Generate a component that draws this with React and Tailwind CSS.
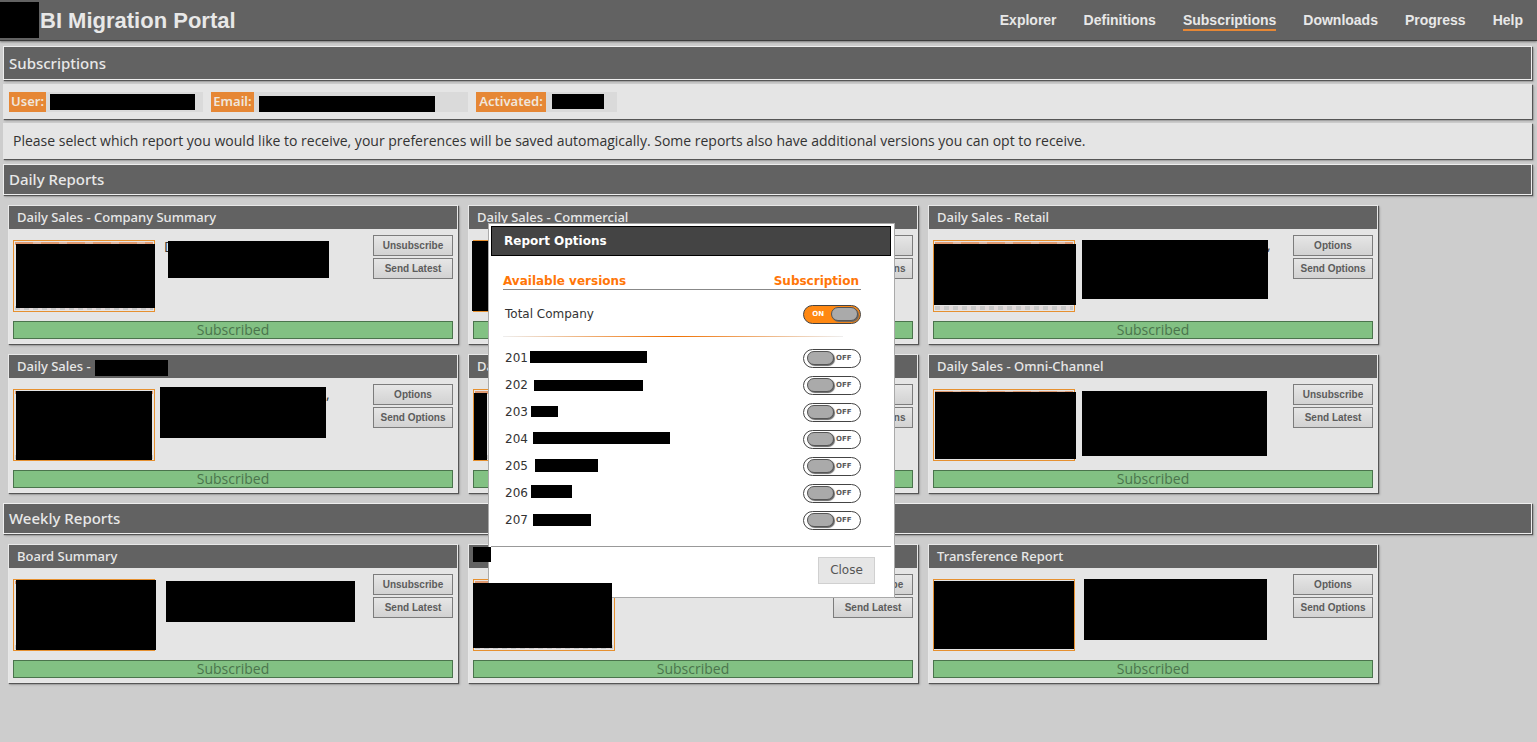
import React, { useState } from "react";

const navItems = ["Explorer", "Definitions", "Subscriptions", "Downloads", "Progress", "Help"];

const dailyReports = [
  {
    title: "Daily Sales - Company Summary",
    actions: ["Unsubscribe", "Send Latest"],
    thumb: "left-[7px] top-[38px] w-[139px] h-[64px]",
    desc: "left-[159px] top-[35px] w-[161px] h-[37px]",
    lead: "D",
  },
  {
    title: "Daily Sales - Commercial",
    actions: ["Options", "Send Options"],
    thumb: "left-[3px] top-[35px] w-[139px] h-[70px]",
  },
  {
    title: "Daily Sales - Retail",
    actions: ["Options", "Send Options"],
    thumb: "left-[5px] top-[38px] w-[142px] h-[61px]",
    desc: "left-[153px] top-[34px] w-[186px] h-[59px]",
    tail: "left-[338px] top-[29px]",
  },
  {
    title: "Daily Sales -",
    masked: "w-[73px]",
    actions: ["Options", "Send Options"],
    thumb: "left-[7px] top-[36px] w-[136px] h-[69px]",
    desc: "left-[151px] top-[32px] w-[166px] h-[51px]",
    tail: "left-[317px] top-[29px]",
  },
  {
    title: "Daily Sales -",
    masked: "w-[73px]",
    actions: ["Options", "Send Options"],
    thumb: "left-[5px] top-[38px] w-[13px] h-[67px]",
  },
  {
    title: "Daily Sales - Omni-Channel",
    actions: ["Unsubscribe", "Send Latest"],
    thumb: "left-[6px] top-[37px] w-[141px] h-[67px]",
    desc: "left-[153px] top-[36px] w-[185px] h-[65px]",
  },
];

const weeklyReports = [
  {
    title: "Board Summary",
    actions: ["Unsubscribe", "Send Latest"],
    thumb: "left-[7px] top-[35px] w-[140px] h-[70px]",
    desc: "left-[157px] top-[36px] w-[189px] h-[41px]",
  },
  {
    title: "",
    cover: "left-[4px] top-[2px] w-[18px] h-[15px]",
    actions: ["Unsubscribe", "Send Latest"],
    thumb: "left-[4px] top-[38px] w-[139px] h-[65px] z-20",
  },
  {
    title: "Transference Report",
    actions: ["Options", "Send Options"],
    thumb: "left-[5px] top-[36px] w-[140px] h-[68px]",
    desc: "left-[155px] top-[34px] w-[183px] h-[61px]",
  },
];

const versions = [
  { code: "201", mask: "left-[27px] top-[7px] w-[117px] h-[12px]" },
  { code: "202", mask: "left-[31px] top-[9px] w-[109px] h-[11px]" },
  { code: "203", mask: "left-[28px] top-[8px] w-[27px] h-[11px]" },
  { code: "204", mask: "left-[30px] top-[7px] w-[137px] h-[12px]" },
  { code: "205", mask: "left-[32px] top-[7px] w-[63px] h-[13px]" },
  { code: "206", mask: "left-[28px] top-[6px] w-[41px] h-[13px]" },
  { code: "207", mask: "left-[30px] top-[8px] w-[58px] h-[12px]" },
];

const panelShadow = "shadow-[1px_1px_1px_#555,2px_2px_2px_#aaa]";

function SectionBar({ children, className = "h-[31px]" }) {
  return (
    <h2
      className={`flex items-center border border-[#eee] bg-[#626262] px-[5px] font-['Noto_Sans','Open_Sans',sans-serif] text-[15px] font-medium text-[#e8e8e8] ${panelShadow} ${className}`}
    >
      {children}
    </h2>
  );
}

function Field({ label, boxClass, labelClass, maskClass }) {
  return (
    <div className={`flex h-5 items-center bg-[#dadada] ${boxClass}`}>
      <span
        className={`flex h-5 items-center justify-center bg-[#e68735] font-['Noto_Sans','Open_Sans',sans-serif] text-[13px] font-semibold text-[#f0e6dc] ${labelClass}`}
      >
        {label}
      </span>
      <span className={`bg-black ${maskClass}`} />
    </div>
  );
}

function ReportCard({ report }) {
  return (
    <article className={`relative flex w-[450px] flex-col border border-[#e8e8e8] bg-[#e5e5e5] ${panelShadow}`}>
      <h3 className="flex h-[23px] items-center gap-1 bg-[#626262] px-2 font-['Noto_Sans','Open_Sans',sans-serif] text-[13px] font-medium text-[#e8e8e8]">
        {report.title}
        {report.masked && <span className={`mt-[3px] h-4 bg-black ${report.masked}`} />}
      </h3>
      <div className="flex px-1 pb-[9px] pt-[6px]">
        <div className="mt-[5px] h-[72px] w-[142px] border border-[#e6902f] p-px">
          <div className="flex h-full flex-col justify-between">
            <div className="h-[3px] bg-[repeating-linear-gradient(90deg,#e09a70_0_18px,#e3b8a0_18px_26px)]" />
            <div className="h-1 bg-[repeating-linear-gradient(90deg,#c8c8c8_0_5px,#e2dada_5px_9px)]" />
          </div>
        </div>
        {report.lead && <span className="ml-[9px] mt-[2px] text-sm text-[#333]">{report.lead}</span>}
        <div className="ml-auto flex flex-col gap-[2px]">
          {report.actions.map((a) => (
            <button
              key={a}
              type="button"
              className="h-[21px] w-20 border border-[#7c7c7c] bg-linear-to-b from-[#e6e6e6] to-[#d2d2d2] text-center font-['Liberation_Sans',Arial,sans-serif] text-[10px] font-bold text-[#5c5c5c]"
            >
              {a}
            </button>
          ))}
        </div>
      </div>
      <div className="mx-1 mb-1 flex h-[18px] items-center justify-center border border-[#4a744c] bg-[#82c183] text-sm text-[#4a744c]">
        Subscribed
      </div>
      {report.tail && <span className={`absolute text-sm text-[#333] ${report.tail}`}>,</span>}
      <span className={`absolute bg-black ${report.thumb}`} />
      {report.desc && <span className={`absolute bg-black ${report.desc}`} />}
      {report.cover && <span className={`absolute z-20 bg-black ${report.cover}`} />}
    </article>
  );
}

function Toggle({ id, initial }) {
  const [on, setOn] = useState(initial);
  return (
    <label
      htmlFor={id}
      className={`flex h-[19px] w-[58px] cursor-pointer items-center rounded-full border border-[#444] text-[7px] font-bold ${
        on ? "flex-row-reverse gap-[7px] bg-[#ff8812] pr-[2px] text-white" : "gap-[2px] bg-white pl-[3px] text-[#5a5a5a]"
      }`}
    >
      <input
        id={id}
        type="checkbox"
        checked={on}
        onChange={() => setOn(!on)}
        className="h-[14px] w-[27px] shrink-0 cursor-pointer appearance-none rounded-full border border-[#555] bg-[#aaa] shadow-[1px_1px_1px_#666]"
      />
      <span className="pt-px">{on ? "ON" : "OFF"}</span>
    </label>
  );
}

function OptionsDialog({ onClose }) {
  return (
    <div
      role="dialog"
      aria-labelledby="dialog-title"
      className="absolute left-[488px] top-[223px] z-10 w-[407px] border border-[#aaa] bg-white p-[2px] font-['DejaVu_Sans',Verdana,sans-serif] text-[#333]"
    >
      <h2
        id="dialog-title"
        className="flex h-[30px] w-[400px] items-center border border-black bg-[#444] px-3 text-xs font-bold text-white"
      >
        Report Options
      </h2>
      <table className="ml-3 mt-[17px] w-[358px] border-collapse text-xs">
        <thead>
          <tr className="h-4 border-b border-[#888] text-[#ff7608]">
            <th className="text-left font-bold">Available versions</th>
            <th className="pr-[2px] text-right font-bold">Subscription</th>
          </tr>
        </thead>
        <tbody>
          <tr className="h-[46px]">
            <td className="px-[2px] pt-[3px]">Total Company</td>
            <td className="pt-[3px]">
              <div className="flex justify-end">
                <Toggle id="total" initial={true} />
              </div>
            </td>
          </tr>
          <tr className="h-2">
            <td colSpan={2} className="pb-[7px]">
              <div className="h-px w-[340px] bg-[linear-gradient(90deg,#eeeeee,#f07000,#eeeeee)]" />
            </td>
          </tr>
          {versions.map((v) => (
            <tr key={v.code} className="h-[27px]">
              <td className="relative px-[2px] pt-[2px]">
                {v.code}
                <span className={`absolute bg-black ${v.mask}`} />
              </td>
              <td className="pt-[2px]">
                <div className="flex justify-end">
                  <Toggle id={`v${v.code}`} initial={false} />
                </div>
              </td>
            </tr>
          ))}
        </tbody>
      </table>
      <div className="mt-[13px] flex w-[400px] justify-end border-t border-[#999] px-4 pb-[11px] pt-[10px]">
        <button
          type="button"
          onClick={onClose}
          className="h-[27px] w-[57px] border border-[#d0d0d0] bg-[#e6e6e6] text-xs text-[#555]"
        >
          Close
        </button>
      </div>
    </div>
  );
}

export default function App() {
  const [open, setOpen] = useState(true);
  return (
    <div className="relative min-h-screen bg-[#cdcdcd] font-['Open_Sans',sans-serif]">
      <header className="flex h-[41px] items-center justify-between border-b border-[#3c3c3c] bg-[#626262] pr-[14px] font-['Liberation_Sans',Arial,sans-serif] font-bold text-[#e8e8e8] shadow-[0_1px_2px_#777]">
        <div className="flex items-center gap-px">
          <span className="h-9 w-[39px] bg-black" />
          <h1 className="text-[22px]">BI Migration Portal</h1>
        </div>
        <nav className="flex gap-[27px] text-sm">
          {navItems.map((n) => (
            <a
              key={n}
              href={`#${n.toLowerCase()}`}
              className={`border-b-2 pt-[2px] leading-[17px] ${n === "Subscriptions" ? "border-[#e68735]" : "border-transparent"}`}
            >
              {n}
            </a>
          ))}
        </nav>
      </header>
      <main className="pb-14 pl-[3px] pr-[5px] pt-[5px]">
        <SectionBar className="h-[34px]">Subscriptions</SectionBar>
        <section className={`mt-1 flex h-[35px] items-center gap-2 bg-[#e5e5e5] px-[6px] ${panelShadow}`}>
          <Field label="User:" boxClass="w-[194px]" labelClass="w-[37px]" maskClass="ml-1 mt-px h-4 w-[145px]" />
          <Field label="Email:" boxClass="w-[257px]" labelClass="w-[43px]" maskClass="ml-[5px] mt-1 h-4 w-[176px]" />
          <Field label="Activated:" boxClass="w-[141px]" labelClass="w-[70px]" maskClass="ml-[6px] h-[15px] w-[52px]" />
        </section>
        <p className={`mt-1 flex h-9 items-center bg-[#e5e5e5] px-[10px] text-sm text-[#333] ${panelShadow}`}>
          Please select which report you would like to receive, your preferences will be saved automagically. Some
          reports also have additional versions you can opt to receive.
        </p>
        <SectionBar className="mt-[5px] h-[31px]">Daily Reports</SectionBar>
        <section className="flex flex-wrap gap-[10px] px-[5px] py-[10px]">
          {dailyReports.map((r, i) => (
            <ReportCard key={i} report={r} />
          ))}
        </section>
        <SectionBar>Weekly Reports</SectionBar>
        <section className="flex flex-wrap gap-[10px] px-[5px] py-[10px]">
          {weeklyReports.map((r, i) => (
            <ReportCard key={i} report={r} />
          ))}
        </section>
      </main>
      {open && <OptionsDialog onClose={() => setOpen(false)} />}
    </div>
  );
}
